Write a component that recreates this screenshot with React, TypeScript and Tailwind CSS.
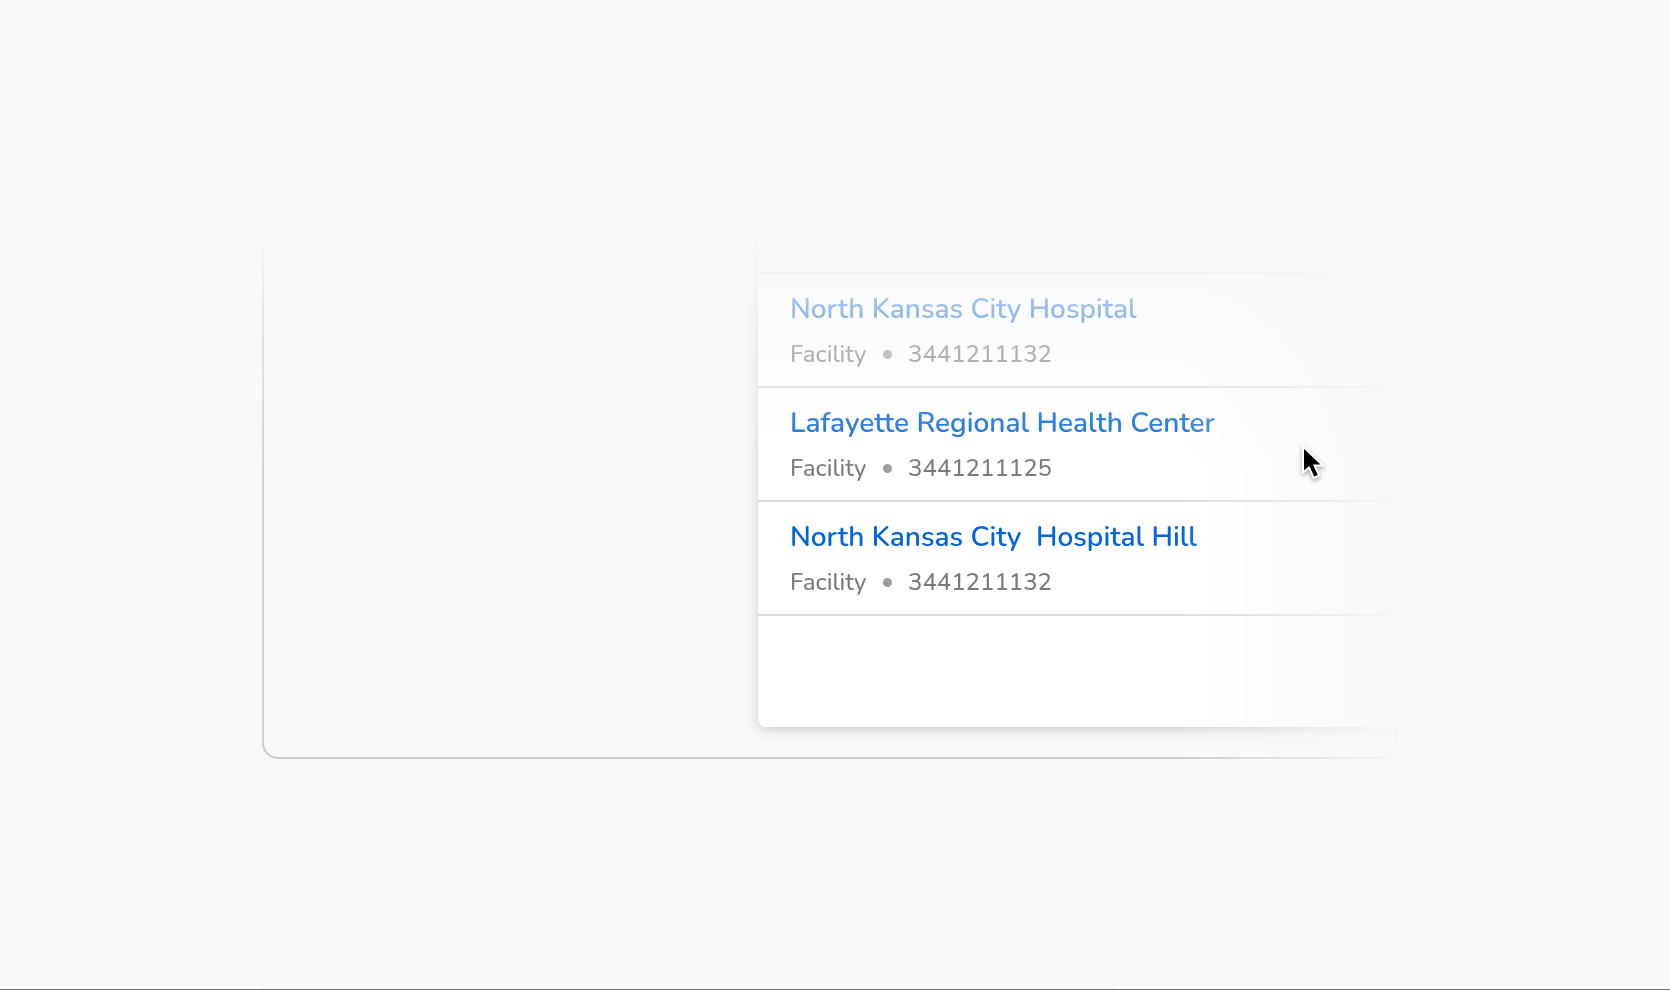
type Facility = { name: string; kind: string; id: string };

const facilities: Facility[] = [
  { name: 'North Kansas City Hospital', kind: 'Facility', id: '3441211132' },
  { name: 'Lafayette Regional Health Center', kind: 'Facility', id: '3441211125' },
  { name: 'North Kansas City  Hospital Hill', kind: 'Facility', id: '3441211132' },
];

function FacilityRow({ facility }: { facility: Facility }) {
  return (
    <li className="flex h-[114px] flex-col gap-[9px] border-b-2 border-[#dcdcdc] px-8 pt-[15px]">
      <a href="#" className="whitespace-pre text-[28px] leading-10 font-semibold text-[#0466d6]">
        {facility.name}
      </a>
      <p className="flex items-center text-2xl leading-8 font-medium text-[#7b7b7b]">
        <span className="w-[93px]">{facility.kind}</span>
        <span className="mr-4 size-[9px] rounded-full bg-[#9b9d9f]" />
        <span>{facility.id}</span>
      </p>
    </li>
  );
}

function Pointer() {
  return (
    <svg
      className="absolute top-[440px] left-[1296px] h-[44px] w-[34px] overflow-visible drop-shadow-[0_2px_2px_rgba(0,0,0,0.35)]"
      viewBox="0 0 34 44"
      aria-hidden="true"
    >
      <path d="M7 6.5v26l6-5 4.7 10.500 5.500-2.500-4.700-10h8.500z" fill="#000" stroke="#fff" strokeWidth="2" />
    </svg>
  );
}

export default function App() {
  return (
    <main className="relative flex min-h-screen flex-col justify-between border-b border-[#707070] bg-[#f9f9f9] font-['Nunito','Lato',sans-serif]">
      <div className="pt-[202px] pr-[264px] pb-8 pl-[262px] [mask-composite:intersect] [mask-image:linear-gradient(to_bottom,transparent_232px,rgb(0_0_0/0.22)_274px,rgb(0_0_0/0.4)_310px,black_472px),linear-gradient(to_left,transparent_264px,black_490px)]">
        <section className="mt-8 mr-[10px] flex h-[525px] items-end rounded-2xl border-2 border-[#cfcfcf] pb-[30px] pl-[494px]">
          <ul className="-mr-2 min-w-0 flex-1 rounded-lg bg-white shadow-[0_3px_12px_rgba(0,0,0,0.18)]">
            <li className="h-12 border-b-2 border-[#dcdcdc]" />
            {facilities.map((facility, index) => (
              <FacilityRow key={index} facility={facility} />
            ))}
            <li className="h-[111px]" />
          </ul>
        </section>
      </div>
      <div className="flex h-[3px] justify-between">
        <div className="w-[263px] bg-white" />
        <div className="w-1/3 bg-white" />
      </div>
      <Pointer />
    </main>
  );
}
